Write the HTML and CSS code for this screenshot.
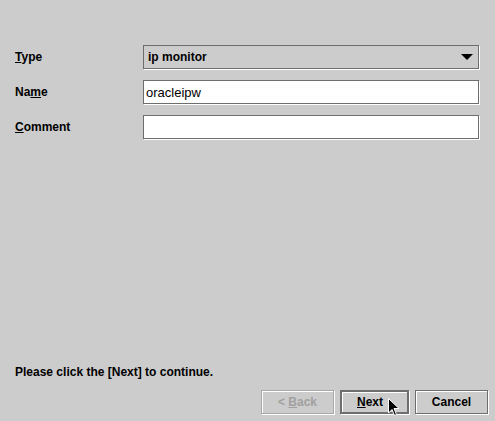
FILE: index.html
```html
<!DOCTYPE html>
<html lang="en">
<head>
    <meta charset="UTF-8">
    <title>Create Monitor</title>
    <link rel="stylesheet" href="styles.css">
</head>
<body>
    <div class="wizard">
        <div class="fields">
            <label class="field-label"><u>T</u>ype</label>
            <div class="combo">
                <span class="combo-value">ip monitor</span>
                <svg class="combo-arrow" width="12" height="7" viewBox="0 0 12 7"><polygon points="0,0 12,0 6,6" fill="#000"/></svg>
            </div>

            <label class="field-label" for="name">Na<u>m</u>e</label>
            <input class="text-input" type="text" id="name" value="oracleipw">

            <label class="field-label" for="comment"><u>C</u>omment</label>
            <input class="text-input" type="text" id="comment" value="">
        </div>

        <div class="status">Please click the [Next] to continue.</div>

        <div class="buttons">
            <button class="btn" disabled>&lt; <u>B</u>ack</button>
            <button class="btn btn-default"><u>N</u>ext</button>
            <button class="btn">Cancel</button>
            <svg class="cursor" width="12" height="19" viewBox="0 0 12 19">
                <path d="M0.5 0.5 L0.5 15 L4 11.5 L6.5 17.5 L8.5 16.5 L6 10.5 L11 10.5 Z" fill="#000" stroke="#fff" stroke-width="1"/>
            </svg>
        </div>
    </div>
</body>
</html>
```

FILE: styles.css
```css
body {
    margin: 0;
    background-color: #cccccc;
    font-family: "Liberation Sans", Arial, sans-serif;
    font-size: 12px;
    color: #000;
}

.wizard {
    height: 421px;
    display: flex;
    flex-direction: column;
    box-sizing: border-box;
    padding: 45px 7px 7px 15px;
}

.fields {
    display: grid;
    grid-template-columns: 128px 336px;
    grid-auto-rows: 24px;
    row-gap: 11px;
    align-items: center;
}

.field-label {
    font-weight: bold;
}

.field-label u {
    text-decoration-thickness: 1px;
}

.combo {
    height: 24px;
    box-sizing: border-box;
    border: 1px solid #6e6e6e;
    box-shadow: 1px 1px 0 #fff;
    display: flex;
    align-items: center;
    justify-content: space-between;
    padding: 0 5px 0 4px;
    font-weight: bold;
}

.combo-arrow {
    display: block;
}

.text-input {
    width: 336px;
    height: 24px;
    box-sizing: border-box;
    margin: 0;
    padding: 0 2px;
    border: 1px solid #6e6e6e;
    box-shadow: 1px 1px 0 #fff;
    background-color: #fff;
    font-family: "Liberation Sans", Arial, sans-serif;
    font-size: 13px;
    color: #000;
    outline: none;
}

.status {
    margin-top: auto;
    font-weight: bold;
    margin-bottom: 11px;
}

.buttons {
    position: relative;
    display: flex;
    justify-content: flex-end;
    gap: 6px;
}

.btn {
    width: 73px;
    height: 24px;
    box-sizing: border-box;
    margin: 0;
    padding: 0;
    border: 1px solid #6e6e6e;
    box-shadow: inset 1px 1px 0 #fff, 1px 1px 0 #fff;
    background-color: #cccccc;
    font-family: "Liberation Sans", Arial, sans-serif;
    font-size: 12px;
    font-weight: bold;
    color: #000;
}

.btn:disabled {
    color: #a0a0a0;
    border-color: #a8a8a8;
}

.btn-default {
    border: 2px solid #6e6e6e;
    width: 69px;
    padding-right: 9px;
}

.cursor {
    position: absolute;
    left: 373px;
    top: 8px;
}
```
